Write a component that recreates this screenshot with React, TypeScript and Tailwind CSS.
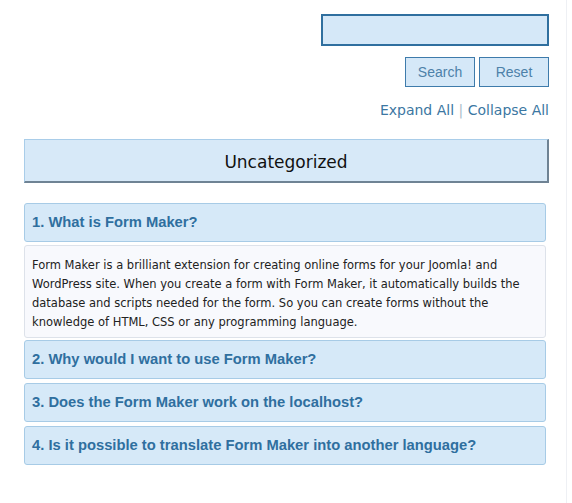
import React from "react";

const questions = [
  "1. What is Form Maker?",
  "2. Why would I want to use Form Maker?",
  "3. Does the Form Maker work on the localhost?",
  "4. Is it possible to translate Form Maker into another language?",
];

const answer =
  "Form Maker is a brilliant extension for creating online forms for your Joomla! and WordPress site. When you create a form with Form Maker, it automatically builds the database and scripts needed for the form. So you can create forms without the knowledge of HTML, CSS or any programming language.";

const Question = ({ text }: { text: string }) => (
  <div className="h-[39px] flex items-center px-[7px] bg-[#d6e9f8] border border-[#a7cbe6] rounded-[3px]">
    <span className="font-['Liberation_Sans',Arial,sans-serif] font-bold text-[14.75px] text-[#2f6f9f]">
      {text}
    </span>
  </div>
);

export default function App() {
  return (
    <div className="relative w-full h-[503px] bg-white overflow-hidden">
      {/* faint page edge on the right */}
      <div className="absolute top-0 bottom-0 left-[566px] w-px bg-[#eef0f4]" />

      <div className="pl-[24px] pr-[23px] pt-[14px]">
        {/* search */}
        <div className="flex flex-col items-end">
          <input
            type="text"
            className="w-[228px] h-[32px] bg-[#d5e8f8] border-2 border-[#2f6f9f] outline-none"
          />
          <div className="flex gap-[4px] mt-[11px]">
            <button className="w-[70px] h-[30px] bg-[#d5e8f8] border border-[#3e7bab] text-[#4d81a9] text-[14px] font-['Liberation_Sans',Arial,sans-serif]">
              Search
            </button>
            <button className="w-[70px] h-[30px] bg-[#d5e8f8] border border-[#3e7bab] text-[#4d81a9] text-[14px] font-['Liberation_Sans',Arial,sans-serif]">
              Reset
            </button>
          </div>
          <div className="mt-[13px] leading-[20px] text-[14px] font-['DejaVu_Sans',sans-serif] text-[#3c77a2]">
            <span>Expand All</span>
            <span className="text-[#a9bccb]"> | </span>
            <span>Collapse All</span>
          </div>
        </div>

        {/* category */}
        <div className="mt-[19px] h-[44px] pt-[4px] flex items-center justify-center bg-[#d7e9f8] border-t border-l border-b-2 border-r-2 border-t-[#a9cde9] border-l-[#a9cde9] border-b-[#6f8394] border-r-[#6f8394]">
          <span className="text-[17px] font-['DejaVu_Sans',sans-serif] text-[#111]">Uncategorized</span>
        </div>

        {/* faq list */}
        <div className="mt-[20px] mr-[3px] flex flex-col">
          <Question text={questions[0]} />
          <div className="mt-[3px] mb-[2px] bg-[#f8f9fd] border border-[#dde2ea] rounded-[3px] pl-[7px] pr-[6px] pt-[10px] pb-[5px]">
            <p className="text-[11.5px] leading-[19px] font-['DejaVu_Sans',sans-serif] text-[#222]">
              {answer}
            </p>
          </div>
          <div className="flex flex-col gap-[4px]">
            {questions.slice(1).map((q) => (
              <Question key={q} text={q} />
            ))}
          </div>
        </div>
      </div>
    </div>
  );
}
